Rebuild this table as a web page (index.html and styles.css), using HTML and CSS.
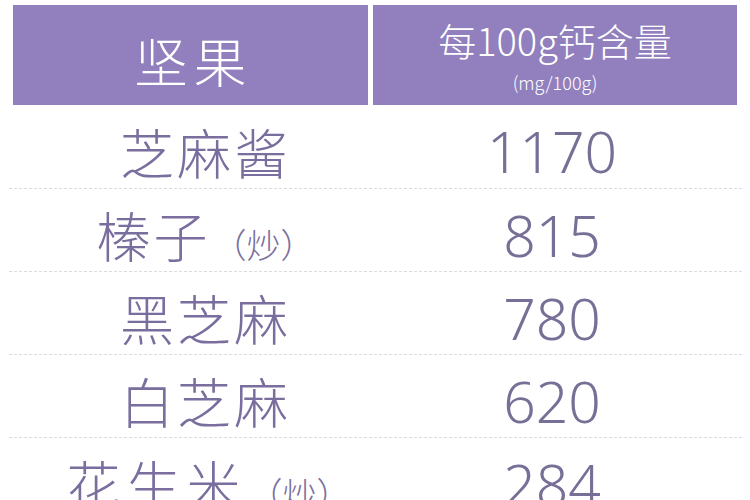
FILE: index.html
```html
<!DOCTYPE html>
<html lang="zh-CN">
<head>
<meta charset="utf-8">
<title>坚果钙含量</title>
<link rel="stylesheet" href="styles.css">
</head>
<body>
<div class="page">
  <div class="head">
    <div class="hcell hleft">坚果</div>
    <div class="hcell hright">
      <div class="htitle">每100g钙含量</div>
      <div class="hunit">(mg/100g)</div>
    </div>
  </div>
  <div class="rows">
    <div class="row"><div class="name">芝麻酱</div><div class="num">1170</div></div>
    <div class="row"><div class="name">榛子<span class="note">（炒）</span></div><div class="num">815</div></div>
    <div class="row"><div class="name">黑芝麻</div><div class="num">780</div></div>
    <div class="row"><div class="name">白芝麻</div><div class="num">620</div></div>
    <div class="row last"><div class="name wide">花生米<span class="note">（炒）</span></div><div class="num">284</div></div>
  </div>
</div>
</body>
</html>
```

FILE: styles.css
```css
html, body {
  margin: 0;
  padding: 0;
  background: #ffffff;
}
body {
  width: 750px;
  height: 500px;
  overflow: hidden;
  font-family: "Noto Sans CJK SC", "Noto Sans", sans-serif;
}
.page {
  padding-top: 5px;
}
.head {
  display: grid;
  grid-template-columns: 355px 364px;
  column-gap: 5px;
  margin-left: 13px;
  height: 100px;
}
.hcell {
  background: #9180bd;
  color: #ffffff;
  display: flex;
  flex-direction: column;
  align-items: center;
  justify-content: center;
}
.hleft {
  font-size: 53px;
  letter-spacing: 6px;
  padding-top: 10px;
  padding-left: 6px;
  box-sizing: border-box;
  font-weight: 300;
  line-height: 1;
}
.hright {
  font-weight: 300;
  justify-content: flex-start;
  padding-top: 15px;
  box-sizing: border-box;
}
.htitle {
  font-size: 38px;
  line-height: 40px;
  letter-spacing: 0;
}
.hunit {
  font-size: 18px;
  line-height: 20px;
  margin-top: 12px;
}
.rows {
  margin-left: 9px;
  width: 733px;
}
.row {
  display: grid;
  grid-template-columns: 359px 374px;
  height: 83px;
  border-bottom: 1px dashed #dcd8e4;
  box-sizing: border-box;
  align-items: center;
  color: #7a6e9e;
  font-weight: 300;
}
.row:first-child {
  height: 84px;
}
.name {
  font-size: 54px;
  letter-spacing: 3px;
  text-align: center;
  padding-left: 34px;
  padding-top: 10px;
  line-height: 1;
  white-space: nowrap;
}
.name.wide {
  letter-spacing: 6px;
  padding-left: 40px;
}
.note {
  font-size: 34px;
  letter-spacing: 0;
  margin-left: 2px;
}
.num {
  font-family: "Noto Sans", "Noto Sans CJK SC", sans-serif;
  font-size: 57px;
  text-align: center;
  line-height: 1;
  padding-top: 10px;
  padding-right: 6px;
  color: #786f97;
}
```
